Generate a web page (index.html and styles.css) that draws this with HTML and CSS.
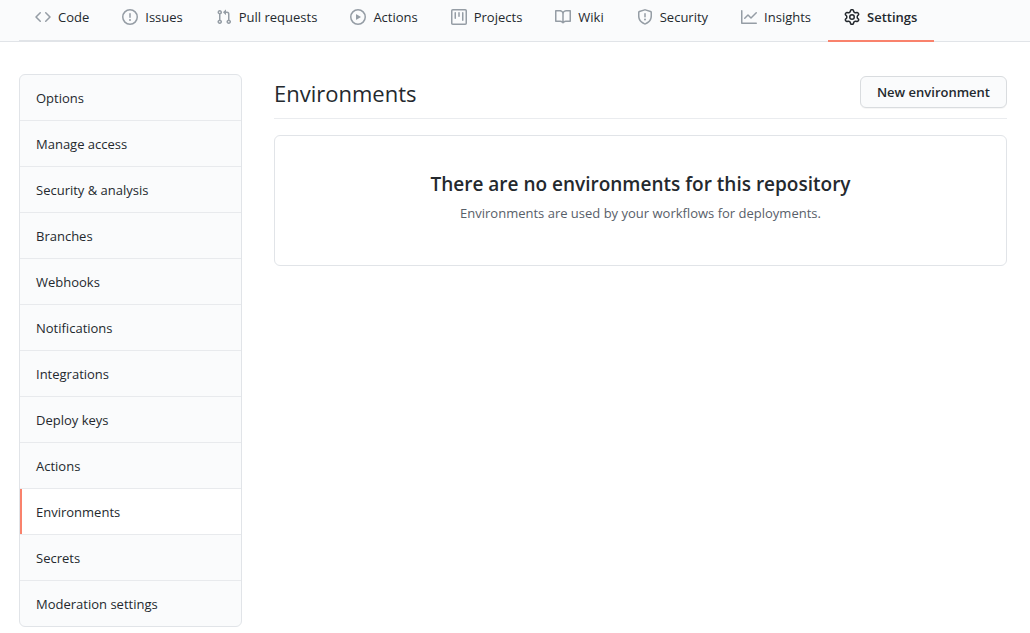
FILE: index.html
```html
<!DOCTYPE html>
<html lang="en">
<head>
<meta charset="utf-8">
<meta name="viewport" content="width=device-width, initial-scale=1">
<title>Environments</title>
<link rel="stylesheet" href="styles.css">
</head>
<body>
<nav class="tabs" aria-label="Repository">
  <a class="tab tab-marked" href="#code"><svg class="icon" viewBox="0 0 16 16" aria-hidden="true"><path d="M4.72 3.22a.75.75 0 011.06 1.06L2.06 8l3.72 3.72a.75.75 0 11-1.06 1.06L.47 8.53a.75.75 0 010-1.06l4.25-4.25zm6.56 0a.75.75 0 10-1.06 1.06L13.94 8l-3.72 3.72a.75.75 0 101.06 1.06l4.25-4.25a.75.75 0 000-1.06l-4.25-4.25z"/></svg><span>Code</span></a>
  <a class="tab tab-marked" href="#issues"><svg class="icon" viewBox="0 0 16 16" aria-hidden="true"><path fill-rule="evenodd" d="M8 1.5a6.5 6.5 0 100 13 6.5 6.5 0 000-13zM0 8a8 8 0 1116 0A8 8 0 010 8zm9 3a1 1 0 11-2 0 1 1 0 012 0zm-.25-6.25a.75.75 0 00-1.5 0v3.5a.75.75 0 001.5 0v-3.5z"/></svg><span>Issues</span></a>
  <a class="tab" href="#pulls"><svg class="icon" viewBox="0 0 16 16" aria-hidden="true"><path fill-rule="evenodd" d="M7.177 3.073L9.573.677A.25.25 0 0110 .854v4.792a.25.25 0 01-.427.177L7.177 3.427a.25.25 0 010-.354zM3.75 2.5a.75.75 0 100 1.5.75.75 0 000-1.5zm-2.25.75a2.25 2.25 0 113 2.122v5.256a2.251 2.251 0 11-1.5 0V5.372A2.25 2.25 0 011.5 3.25zM11 2.5h-1V4h1a1 1 0 011 1v5.628a2.251 2.251 0 101.5 0V5A2.5 2.5 0 0011 2.5zm1 10.25a.75.75 0 111.5 0 .75.75 0 01-1.5 0zM3.75 12a.75.75 0 100 1.5.75.75 0 000-1.5z"/></svg><span>Pull requests</span></a>
  <a class="tab" href="#actions"><svg class="icon" viewBox="0 0 16 16" aria-hidden="true"><path fill-rule="evenodd" d="M1.5 8a6.5 6.5 0 1113 0 6.5 6.5 0 01-13 0zM8 0a8 8 0 100 16A8 8 0 008 0zM6.379 5.227A.25.25 0 006 5.442v5.117a.25.25 0 00.379.214l4.264-2.559a.25.25 0 000-.428L6.379 5.227z"/></svg><span>Actions</span></a>
  <a class="tab" href="#projects"><svg class="icon" viewBox="0 0 16 16" aria-hidden="true"><path fill-rule="evenodd" d="M1.75 0A1.75 1.75 0 000 1.75v12.5C0 15.216.784 16 1.75 16h12.5A1.75 1.75 0 0016 14.25V1.75A1.75 1.75 0 0014.25 0H1.75zM1.5 1.75a.25.25 0 01.25-.25h12.5a.25.25 0 01.25.25v12.5a.25.25 0 01-.25.25H1.75a.25.25 0 01-.25-.25V1.75zM11.75 3a.75.75 0 00-.75.75v7.5a.75.75 0 001.5 0v-7.5a.75.75 0 00-.75-.75zm-8.25.75a.75.75 0 011.5 0v5.5a.75.75 0 01-1.5 0v-5.5zM8 3a.75.75 0 00-.75.75v3.5a.75.75 0 001.5 0v-3.5A.75.75 0 008 3z"/></svg><span>Projects</span></a>
  <a class="tab" href="#wiki"><svg class="icon" viewBox="0 0 16 16" aria-hidden="true"><path fill-rule="evenodd" d="M0 1.75A.75.75 0 01.75 1h4.253c1.227 0 2.317.59 3 1.501A3.744 3.744 0 0111.006 1h4.245a.75.75 0 01.75.75v10.5a.75.75 0 01-.75.75h-4.507a2.25 2.25 0 00-1.591.659l-.622.621a.75.75 0 01-1.06 0l-.622-.621A2.25 2.25 0 005.258 13H.75a.75.75 0 01-.75-.75V1.75zm8.755 3a2.25 2.25 0 012.25-2.25H14.5v9h-3.757c-.71 0-1.4.201-1.992.572l.004-7.322zm-1.504 7.324l.004-5.073-.002-2.253A2.25 2.25 0 005.003 2.5H1.5v9h3.757a3.75 3.75 0 011.994.574z"/></svg><span>Wiki</span></a>
  <a class="tab" href="#security"><svg class="icon" viewBox="0 0 16 16" aria-hidden="true"><path fill-rule="evenodd" d="M7.467.133a1.75 1.75 0 011.066 0l5.25 1.68A1.75 1.75 0 0115 3.48V7c0 1.566-.32 3.182-1.303 4.682-.983 1.498-2.585 2.813-5.032 3.855a1.7 1.7 0 01-1.33 0c-2.447-1.042-4.049-2.357-5.032-3.855C1.32 10.182 1 8.566 1 7V3.48a1.75 1.75 0 011.217-1.667l5.25-1.68zm.61 1.429a.25.25 0 00-.153 0l-5.25 1.68a.25.25 0 00-.174.238V7c0 1.358.275 2.666 1.057 3.86.784 1.194 2.121 2.34 4.366 3.297a.2.2 0 00.154 0c2.245-.956 3.582-2.104 4.366-3.298C13.225 9.666 13.5 8.36 13.5 7V3.48a.25.25 0 00-.174-.237l-5.25-1.68zM9 10.5a1 1 0 11-2 0 1 1 0 012 0zm-.25-5.75a.75.75 0 10-1.5 0v3a.75.75 0 001.5 0v-3z"/></svg><span>Security</span></a>
  <a class="tab" href="#insights"><svg class="icon" viewBox="0 0 16 16" aria-hidden="true"><path fill-rule="evenodd" d="M1.5 1.75a.75.75 0 00-1.5 0v12.5c0 .414.336.75.75.75h14.5a.75.75 0 000-1.5H1.5V1.75zm14.28 2.53a.75.75 0 00-1.06-1.06L10 7.94 7.53 5.47a.75.75 0 00-1.06 0L3.22 8.72a.75.75 0 001.06 1.06L7 7.06l2.47 2.47a.75.75 0 001.06 0l5.25-5.25z"/></svg><span>Insights</span></a>
  <a class="tab tab-current" href="#settings" aria-current="page"><svg class="icon" viewBox="0 0 16 16" aria-hidden="true"><path fill-rule="evenodd" d="M7.429 1.525a6.593 6.593 0 011.142 0c.036.003.108.036.137.146l.289 1.105c.147.56.55.967.997 1.189.174.086.341.183.501.29.417.278.97.423 1.53.27l1.102-.303c.11-.03.175.016.195.046.219.31.41.641.573.989.014.031.022.11-.059.19l-.815.806c-.411.406-.562.957-.53 1.456a4.588 4.588 0 010 .582c-.032.499.119 1.05.53 1.456l.815.806c.08.08.073.159.059.19a6.494 6.494 0 01-.573.99c-.02.029-.086.074-.195.045l-1.103-.303c-.559-.153-1.112-.008-1.529.27-.16.107-.327.204-.5.29-.449.222-.851.628-.998 1.189l-.289 1.105c-.029.11-.101.143-.137.146a6.613 6.613 0 01-1.142 0c-.036-.003-.108-.037-.137-.146l-.289-1.105c-.147-.56-.55-.967-.997-1.189a4.502 4.502 0 01-.501-.29c-.417-.278-.97-.423-1.53-.27l-1.102.303c-.11.03-.175-.016-.195-.046a6.492 6.492 0 01-.573-.989c-.014-.031-.022-.11.059-.19l.815-.806c.411-.406.562-.957.53-1.456a4.587 4.587 0 010-.582c.032-.499-.119-1.05-.53-1.456l-.815-.806c-.08-.08-.073-.159-.059-.19a6.44 6.44 0 01.573-.99c.02-.029.086-.075.195-.045l1.103.303c.559.153 1.112.008 1.529-.27.16-.107.327-.204.5-.29.449-.222.851-.628.998-1.189l.289-1.105c.029-.11.101-.143.137-.146zM8 0c-.236 0-.47.01-.701.03-.743.065-1.29.615-1.458 1.261l-.29 1.106c-.017.066-.078.158-.211.224a5.994 5.994 0 00-.668.386c-.123.082-.233.09-.3.071L3.27 2.776c-.644-.177-1.392.02-1.82.63a7.977 7.977 0 00-.704 1.217c-.315.675-.111 1.422.363 1.891l.815.806c.05.048.098.147.088.294a6.084 6.084 0 000 .772c.01.147-.038.246-.088.294l-.815.806c-.474.469-.678 1.216-.363 1.891.2.428.436.835.704 1.218.428.609 1.176.806 1.82.63l1.103-.303c.066-.019.176-.011.299.071.213.143.436.272.668.386.133.066.194.158.212.224l.289 1.106c.169.646.715 1.196 1.458 1.26a8.094 8.094 0 001.402 0c.743-.064 1.29-.614 1.458-1.26l.29-1.106c.017-.066.078-.158.211-.224a5.98 5.98 0 00.668-.386c.123-.082.233-.09.3-.071l1.102.302c.644.177 1.392-.02 1.82-.63.268-.382.505-.789.704-1.217.315-.675.111-1.422-.364-1.891l-.814-.806c-.05-.048-.098-.147-.088-.294a6.1 6.1 0 000-.772c-.01-.147.039-.246.088-.294l.814-.806c.475-.469.679-1.216.364-1.891a7.992 7.992 0 00-.704-1.218c-.428-.609-1.176-.806-1.82-.63l-1.103.303c-.066.019-.176.011-.299-.071a5.991 5.991 0 00-.668-.386c-.133-.066-.194-.158-.212-.224L10.16 1.29C9.99.645 9.444.095 8.701.031A8.094 8.094 0 008 0zm1.5 8a1.5 1.5 0 11-3 0 1.5 1.5 0 013 0zM11 8a3 3 0 11-6 0 3 3 0 016 0z"/></svg><span>Settings</span></a>
</nav>
<div class="layout">
  <nav class="menu" aria-label="Settings">
    <a class="menu-item" href="#options">Options</a>
    <a class="menu-item" href="#access">Manage access</a>
    <a class="menu-item" href="#analysis">Security &amp; analysis</a>
    <a class="menu-item" href="#branches">Branches</a>
    <a class="menu-item" href="#webhooks">Webhooks</a>
    <a class="menu-item" href="#notifications">Notifications</a>
    <a class="menu-item" href="#integrations">Integrations</a>
    <a class="menu-item" href="#keys">Deploy keys</a>
    <a class="menu-item" href="#actions-settings">Actions</a>
    <a class="menu-item menu-item-current" href="#environments" aria-current="page">Environments</a>
    <a class="menu-item" href="#secrets">Secrets</a>
    <a class="menu-item" href="#moderation">Moderation settings</a>
  </nav>
  <main class="content">
    <header class="subhead">
      <h1 class="subhead-title">Environments</h1>
      <button class="button" type="button">New environment</button>
    </header>
    <section class="blankslate">
      <h2 class="blankslate-title">There are no environments for this repository</h2>
      <p class="blankslate-text">Environments are used by your workflows for deployments.</p>
    </section>
  </main>
</div>
</body>
</html>
```

FILE: styles.css
```css
* {
  box-sizing: border-box;
}

body {
  margin: 0;
  background: #fff;
  color: #24292e;
  font: 13px/21px "Open Sans", "Noto Sans", sans-serif;
}

a {
  color: inherit;
  text-decoration: none;
}

.tabs {
  display: flex;
  height: 42px;
  padding: 0 19px;
  background: #fafbfc;
  border-bottom: 1px solid #e1e4e8;
}

.tab {
  display: flex;
  align-items: center;
  gap: 7px;
  height: 42px;
  padding: 0 17px 6px 16px;
  border-bottom: 2px solid transparent;
  white-space: nowrap;
}

.tab-marked {
  border-bottom-color: #e1e4e8;
}

.tab-current {
  border-bottom-color: #f9826c;
  font-weight: 600;
}

.icon {
  flex: none;
  width: 16px;
  height: 16px;
  fill: #959da5;
}

.tab-current .icon {
  fill: #24292e;
}

.layout {
  display: grid;
  grid-template-columns: 223px minmax(0, 1fr);
  align-items: start;
  gap: 32px;
  padding: 32px 23px 6px 19px;
}

.menu {
  overflow: hidden;
  background: #fafbfc;
  border: 1px solid #e1e4e8;
  border-radius: 6px;
}

.menu-item {
  display: block;
  padding: 13px 16px 11px;
  border-bottom: 1px solid #e8eaed;
}

.menu-item:last-child {
  border-bottom: 0;
}

.menu-item-current {
  background: #fff;
  box-shadow: inset 2px 0 #f9826c;
}

.subhead {
  display: flex;
  align-items: center;
  justify-content: space-between;
  margin-bottom: 16px;
  padding: 2px 0 10px;
  border-bottom: 1px solid #eaecef;
}

.subhead-title {
  margin: 0;
  padding-top: 2px;
  font-size: 22px;
  font-weight: 400;
  line-height: 30px;
}

.button {
  height: 32px;
  padding: 0 16px;
  background: #fafbfc;
  border: 1px solid #d9dcdf;
  border-radius: 6px;
  box-shadow: 0 1px 0 rgba(27, 31, 35, 0.04);
  color: #24292e;
  font: inherit;
  font-weight: 600;
}

.blankslate {
  padding: 32px;
  border: 1px solid #e1e4e8;
  border-radius: 6px;
  text-align: center;
}

.blankslate-title {
  margin: 0 0 3px;
  font-size: 19px;
  font-weight: 600;
  line-height: 32px;
}

.blankslate-text {
  margin: 0 0 9px;
  color: #586069;
}
```
